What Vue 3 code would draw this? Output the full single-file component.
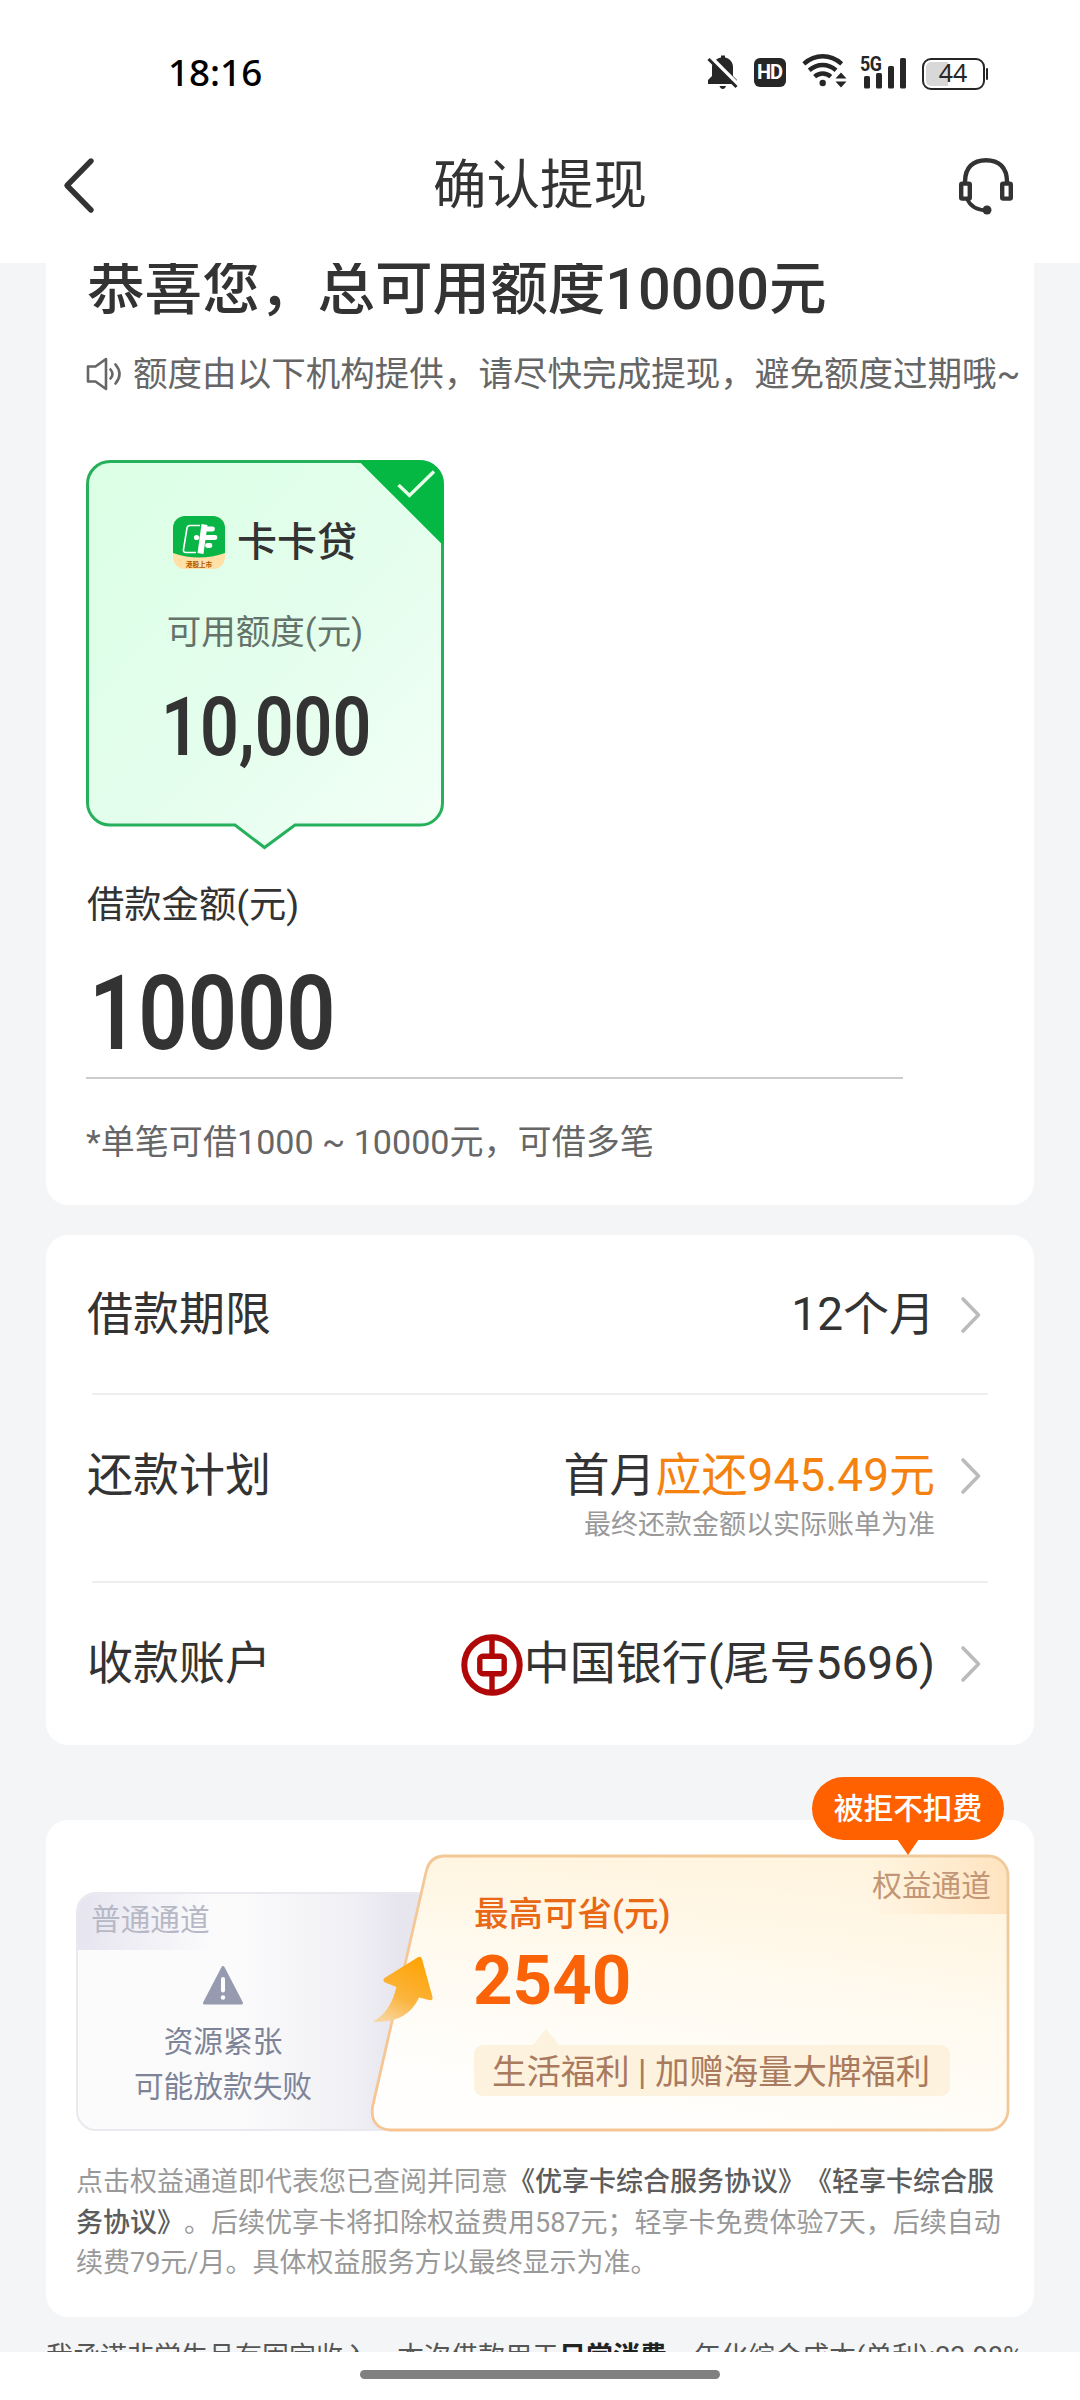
<script setup>
const amount = '10000'
const provider = { name: '卡卡贷', label: '可用额度(元)', quota: '10,000' }
</script>

<template>
  <div class="phone">
    <header class="top">
      <div class="status">
        <span class="time">18:16</span>
        <div class="status-icons">
          <svg class="bell" width="32" height="36" viewBox="0 0 32 36">
            <path d="M14 3.5V1.5h4v2c5 1.2 8 5 8 9.500v9l4 4v4H1v-4l4-4v-9C5 8.500 9 4.700 14 3.500z" fill="#262626" />
            <path d="M12.500 32h6.500c-.6 2-1.800 3-3.200 3s-2.700-1-3.300-3z" fill="#262626" />
            <path d="M3 2.500L33 32.500" stroke="#fff" stroke-width="4" />
            <path d="M1.500 5L29.500 33" stroke="#262626" stroke-width="3" />
          </svg>
          <span class="hd">HD</span>
          <svg class="wifi" width="45" height="36" viewBox="0 0 45 36" fill="none" stroke="#262626" stroke-width="4.400">
            <path d="M1.800 10.800C13.500 .8 28 .8 39.700 10.800" />
            <path d="M7.200 17.200C15.500 10.300 25.800 10.300 34 17.200" />
            <path d="M12.600 23.600C17.400 19.400 24 19.400 28.800 23.600" />
            <circle cx="20.700" cy="30" r="3.200" fill="#262626" stroke="none" />
            <path d="M39 19.500l5.500 6h-11zM39 34.500l5.500-6h-11z" fill="#262626" stroke="none" />
          </svg>
          <div class="signal">
            <span class="net">5G</span>
            <svg width="48" height="32" viewBox="0 0 48 32" fill="#262626">
              <rect x="4" y="19" width="6" height="12.500" rx="1.500" />
              <rect x="16" y="16" width="6" height="15.500" rx="1.500" />
              <rect x="28" y="9" width="6" height="22.500" rx="1.500" />
              <rect x="40" y="1" width="6" height="30.500" rx="1.500" />
            </svg>
          </div>
          <div class="battery"><i class="charge"></i><span>44</span></div>
          <i class="nub"></i>
        </div>
      </div>
      <nav class="nav">
        <svg width="36" height="60" viewBox="0 0 36 60" fill="none" stroke="#333" stroke-width="5.400" stroke-linecap="round" stroke-linejoin="round">
          <path d="M31 6L7 30.500L31 55" />
        </svg>
        <h1>确认提现</h1>
        <svg width="56" height="60" viewBox="0 0 56 60" fill="none" stroke="#333" stroke-width="4.400">
          <path d="M7 27C7 12.500 15 5.200 28 5.200S49 12.500 49 27" />
          <rect x="3.200" y="28.600" width="8.600" height="15" rx="1" />
          <rect x="44.200" y="28.600" width="8.600" height="15" rx="1" />
          <path d="M9 43.500C12 51.500 19 55 29 55.500" stroke-width="3.600" />
          <circle cx="29" cy="55" r="4.500" fill="#333" stroke="none" />
        </svg>
      </nav>
    </header>

    <main class="scroll">
      <section class="card amount-card">
        <h2>恭喜您，总可用额度10000元</h2>
        <div class="tip">
          <svg width="38" height="36" viewBox="0 0 38 36" fill="none" stroke="#666" stroke-width="2.600" stroke-linejoin="round">
            <path d="M2 10.500H9.500L20 3V33L9.500 25.500H2Z" />
            <path d="M24.500 13.500Q28.500 18 24.500 22.500M29.500 8.500Q37.500 18 29.500 27.500" stroke-linecap="round" />
          </svg>
          <span>额度由以下机构提供，请尽快完成提现，避免额度过期哦~</span>
        </div>

        <div class="provider">
          <svg class="provider-bg" width="358" height="390" viewBox="0 0 358 390">
            <defs>
              <linearGradient id="mint" x1="0" y1="0" x2="1" y2="1">
                <stop offset="0" stop-color="#dbffe5" />
                <stop offset=".5" stop-color="#e3feec" />
                <stop offset="1" stop-color="#f3fff7" />
              </linearGradient>
            </defs>
            <path d="M24 1.500H334A22.500 22.500 0 0 1 356.500 24V343A22 22 0 0 1 334 365H209L178.500 387.500L149 365H24A22.500 22.500 0 0 1 1.500 343V24A22.500 22.500 0 0 1 24 1.500Z" fill="url(#mint)" stroke="#27b05c" stroke-width="3" />
            <path d="M272 .2H334A23.800 23.800 0 0 1 357.800 24V86Z" fill="#05b843" />
            <path d="M312.500 25L323.500 35.500L348 11.500" fill="none" stroke="#e8ffe9" stroke-width="3.400" />
          </svg>
          <div class="provider-name">
            <svg width="52" height="53" viewBox="0 0 52 53">
              <defs><clipPath id="tile"><rect width="52" height="53" rx="12" /></clipPath></defs>
              <g clip-path="url(#tile)">
                <rect width="52" height="53" fill="#ffe0a6" />
                <path d="M0 0H52V37Q26 46 0 37Z" fill="#09b546" />
                <path d="M27 9.500H17Q14.500 9.500 14 12L10.500 33.500Q10 36.500 13 36.500H23" fill="none" stroke="#fff" stroke-width="1.600" />
                <path d="M31.500 8.500L27.500 37.500" stroke="#fff" stroke-width="6" />
                <path d="M32 13H39.500M29 21.500H42M34.500 29.500H37" stroke="#fff" stroke-width="4.800" stroke-linecap="round" />
                <circle cx="23.500" cy="21.500" r="2.600" fill="#fff" />
              </g>
              <text x="26" y="50.500" text-anchor="middle" font-size="6.600" font-weight="700" fill="#ab5600">港股上市</text>
            </svg>
            <span>{{ provider.name }}</span>
          </div>
          <div class="provider-label">{{ provider.label }}</div>
          <div class="provider-quota"><span>{{ provider.quota }}</span></div>
        </div>

        <div class="field-label">借款金额(元)</div>
        <div class="field"><span>{{ amount }}</span></div>
        <div class="note">*单笔可借1000 ~ 10000元，可借多笔</div>
      </section>

      <section class="card rows">
        <div class="row r1">
          <span>借款期限</span>
          <div class="value"><span>12个月</span></div>
          <svg class="chev" width="22" height="38" viewBox="0 0 22 38"><path d="M3 3L18.500 19L3 35" /></svg>
        </div>
        <div class="row r2">
          <span>还款计划</span>
          <div class="value">
            <span>首月<em>应还945.49元</em></span>
            <small>最终还款金额以实际账单为准</small>
          </div>
          <svg class="chev" width="22" height="38" viewBox="0 0 22 38"><path d="M3 3L18.500 19L3 35" /></svg>
        </div>
        <div class="row r3">
          <span>收款账户</span>
          <div class="value bank">
            <svg width="62" height="62" viewBox="0 0 62 62" fill="none" stroke="#b00808">
              <circle cx="31" cy="31" r="27.700" stroke-width="6" />
              <rect x="18.800" y="22.300" width="24.400" height="17.500" rx="3" stroke-width="5.400" />
              <path d="M31 3V22M31 40V59" stroke-width="5.400" />
            </svg>
            <span>中国银行(尾号5696)</span>
          </div>
          <svg class="chev" width="22" height="38" viewBox="0 0 22 38"><path d="M3 3L18.500 19L3 35" /></svg>
        </div>
      </section>

      <section class="card channel-card">
        <div class="bubble">被拒不扣费</div>
        <div class="channels">
          <div class="normal">
            <div class="normal-tag">普通通道</div>
            <div class="normal-body">
              <svg width="42" height="40" viewBox="0 0 42 40">
                <path d="M21 2.500L39.500 38H2.500Z" fill="#969bb0" stroke="#969bb0" stroke-width="3" stroke-linejoin="round" />
                <path d="M21 14V25.500" stroke="#fff" stroke-width="4" stroke-linecap="round" />
                <circle cx="21" cy="32.500" r="2.200" fill="#fff" />
              </svg>
              <p>资源紧张</p>
              <p>可能放款失败</p>
            </div>
          </div>
          <div class="vip">
            <svg class="vip-bg" width="640" height="278" viewBox="0 0 640 278">
              <defs>
                <linearGradient id="cream" x1=".62" y1="1" x2="1" y2="0">
                  <stop offset="0" stop-color="#fffefc" />
                  <stop offset=".5" stop-color="#fffaef" />
                  <stop offset="1" stop-color="#fff0d4" />
                </linearGradient>
                <linearGradient id="veil" x1="0" y1="0" x2="0" y2="1">
                  <stop offset="0" stop-color="#fff5e0" stop-opacity=".8" />
                  <stop offset=".6" stop-color="#fffaf0" stop-opacity="0" />
                </linearGradient>
                <linearGradient id="tag" x1="0" y1="0" x2="1" y2="0">
                  <stop offset="0" stop-color="#ffe6c4" stop-opacity="0" />
                  <stop offset="1" stop-color="#fee3bf" />
                </linearGradient>
                <linearGradient id="edge" x1="0" y1="1" x2="1" y2="0">
                  <stop offset="0" stop-color="#f8c493" />
                  <stop offset="1" stop-color="#efcb9c" />
                </linearGradient>
                <clipPath id="vip-shape"><path d="M73 2H618A20 20 0 0 1 638 22V256A20 20 0 0 1 618 276H20Q0 274 2.500 253L56.500 16Q60 3 73 2Z" /></clipPath>
              </defs>
              <path d="M73 2H618A20 20 0 0 1 638 22V256A20 20 0 0 1 618 276H20Q0 274 2.500 253L56.500 16Q60 3 73 2Z" fill="url(#cream)" />
              <path d="M73 2H618A20 20 0 0 1 638 22V256A20 20 0 0 1 618 276H20Q0 274 2.500 253L56.500 16Q60 3 73 2Z" fill="url(#veil)" />
              <rect x="500" y="2" width="140" height="58" fill="url(#tag)" clip-path="url(#vip-shape)" />
              <path d="M73 2H618A20 20 0 0 1 638 22V256A20 20 0 0 1 618 276H20Q0 274 2.500 253L56.500 16Q60 3 73 2Z" fill="none" stroke="url(#edge)" stroke-width="2.800" />
            </svg>
            <svg class="arrow" width="64" height="70" viewBox="0 0 64 70">
              <defs>
                <linearGradient id="amber" x1=".7" y1="0" x2=".25" y2="1">
                  <stop offset="0" stop-color="#ffa305" />
                  <stop offset=".6" stop-color="#fbb43c" />
                  <stop offset="1" stop-color="#f9d49b" />
                </linearGradient>
              </defs>
              <path d="M47.500 3.500Q50.500 1.500 52 5L62.500 43Q63 47 59 46L49 43.500Q37 70 3 67.500Q20 59 26.500 33L15 28.500Q12 26.500 14.500 24Z" fill="url(#amber)" />
            </svg>
            <div class="vip-tag">权益通道</div>
            <div class="vip-label">最高可省(元)</div>
            <div class="vip-sum">2540</div>
            <div class="chip">生活福利 | 加赠海量大牌福利</div>
          </div>
        </div>
        <p class="terms">
          <span>点击权益通道即代表您已查阅并同意<b>《优享卡综合服务协议》《轻享卡综合服</b></span>
          <span><b>务协议》</b>。后续优享卡将扣除权益费用587元；轻享卡免费体验7天，后续自动</span>
          <span>续费79元/月。具体权益服务方以最终显示为准。</span>
        </p>
      </section>

      <p class="promise">我承诺非学生且有固定收入，本次借款用于<b>日常消费</b>，年化综合成本(单利):23.98%</p>
    </main>

    <footer class="bottom"><i></i></footer>
  </div>
</template>

<style>
body {
  margin: 0;
  background: #fff;
}
</style>

<style scoped>
.phone {
  width: 1080px;
  height: 2400px;
  display: flex;
  flex-direction: column;
  overflow: hidden;
  background: #fff;
  color: #333;
  font-family: Roboto, "Noto Sans CJK SC", sans-serif;
  font-kerning: none;
  text-spacing-trim: space-all;
}
h1, h2, p { margin: 0; font-weight: 400; }
em, i { font-style: normal; }
svg { display: block; flex: none; }

.top { height: 263px; flex: none; }
.status {
  height: 108px;
  box-sizing: border-box;
  padding: 53px 92px 0 168px;
  display: flex;
  justify-content: space-between;
  align-items: flex-start;
}
.time {
  font: 500 36.8px/38px "Noto Sans", sans-serif;
  color: #000;
}
.status-icons { display: flex; align-items: flex-start; }
.bell { margin-top: 1px; }
.hd {
  margin: 5px 0 0 15px;
  width: 32px;
  height: 29px;
  border-radius: 6px;
  background: #262626;
  color: #fff;
  font: 700 20px/29px Roboto, sans-serif;
  letter-spacing: -1px;
  text-align: center;
}
.wifi { margin-left: 16px; }
.signal { position: relative; margin: 4px 0 0 13px; width: 48px; }
.net {
  position: absolute;
  left: 0;
  top: -3px;
  font: 700 21px/21px Roboto, sans-serif;
  letter-spacing: -.5px;
  color: #262626;
  transform: scaleX(.85);
  transform-origin: 0 0;
}
.battery {
  position: relative;
  margin: 5px 0 0 14px;
  box-sizing: border-box;
  width: 63px;
  height: 32px;
  border: 2.5px solid #262626;
  border-radius: 9px;
  background: #fff;
  display: flex;
  justify-content: center;
  font: 400 25px/25px "Noto Sans", sans-serif;
  color: #262626;
}
.battery span { position: relative; }
.charge {
  position: absolute;
  left: 2px;
  top: 2px;
  bottom: 2px;
  width: 22px;
  border-radius: 5px 0 0 5px;
  background: #d8d8d8;
}
.nub { width: 2.5px; height: 12px; margin: 15px 0 0 1px; background: #262626; border-radius: 1px; }

.nav {
  display: flex;
  align-items: center;
  justify-content: space-between;
  padding: 0 66px 0 60px;
  height: 153px;
}
.nav h1 { font-size: 53.5px; line-height: 60px; margin: 3px 0 0 26px; }

.scroll {
  flex: none;
  height: 2089px;
  background: #f4f5f7;
  overflow: hidden;
  display: flex;
  flex-direction: column;
}
.card { margin: 0 46px; flex: none; background: #fff; border-radius: 22px; box-sizing: border-box; }

.amount-card { height: 942px; padding: 0 40px; border-radius: 0 0 22px 22px; }
.amount-card h2 { font-size: 57.6px; font-weight: 500; line-height: 60px; padding-left: 1px; margin-top: -3px; white-space: nowrap; }
.tip {
  display: flex;
  align-items: center;
  gap: 9px;
  margin-top: 34px;
  height: 40px;
  font-size: 34.55px;
  line-height: 40px;
  color: #666;
  white-space: nowrap;
}
.provider {
  position: relative;
  margin-top: 66px;
  width: 358px;
  height: 390px;
  display: flex;
  flex-direction: column;
  align-items: center;
}
.provider-bg { position: absolute; left: 0; top: 0; }
.provider-name, .provider-label, .provider-quota { position: relative; }
.provider-name {
  display: flex;
  align-items: center;
  gap: 12px;
  margin-top: 56px;
  font-size: 40px;
  font-weight: 500;
  line-height: 52px;
}
.provider-label { margin-top: 41px; font-size: 34.5px; line-height: 44px; color: #64736a; }
.provider-quota { margin: 34px 0 0 2px; line-height: 80px; font-size: 81px; font-weight: 600; }
.provider-quota span { display: block; transform: scaleX(.84); }

.field-label { margin: 35px 0 0 1px; font-size: 37.3px; line-height: 40px; }
.field {
  margin-top: 25px;
  width: 817px;
  height: 127px;
  border-bottom: 2px solid #ccc;
  font-size: 104px;
  font-weight: 600;
  line-height: 127px;
}
.field span { display: inline-block; transform: scaleX(.83); transform-origin: 0 0; margin-left: 3px; }
.note { margin-top: 42px; font-size: 34.1px; line-height: 42px; color: #666; }

.rows { height: 510px; margin-top: 30px; padding: 0 46px; }
.row { display: flex; align-items: flex-start; font-size: 46px; line-height: 60px; box-sizing: border-box; }
.row > span { margin-left: -5px; }
.r1 { height: 160px; padding-top: 49px; border-bottom: 2px solid #eee; }
.r2 { height: 188px; padding-top: 50px; border-bottom: 2px solid #eee; }
.r3 { padding-top: 50px; }
.value { margin-left: auto; display: flex; flex-direction: column; align-items: flex-end; white-space: nowrap; }
.value em { color: #f5820f; }
.value small { font-size: 27px; line-height: 32px; color: #999; margin-top: 4px; }
.value.bank { flex-direction: row; align-items: flex-start; gap: 1px; }
.bank svg { margin-top: 1px; }
.chev { margin: 12px 6px 0 25px; fill: none; stroke: #bbb; stroke-width: 3.6; stroke-linecap: round; stroke-linejoin: round; }

.channel-card { position: relative; height: 497px; margin-top: 75px; padding: 34px 25px 0 30px; }
.bubble {
  position: absolute;
  z-index: 2;
  left: 766px;
  top: -43px;
  width: 192px;
  height: 63px;
  border-radius: 32px;
  background: #ff6100;
  color: #fff;
  font-size: 29.7px;
  line-height: 64px;
  font-weight: 500;
  text-align: center;
}
.bubble::after {
  content: "";
  position: absolute;
  left: 85px;
  top: 62px;
  border: 11px solid transparent;
  border-top: 16px solid #ff6100;
  border-bottom: 0;
}
.channels { display: flex; align-items: flex-end; height: 277px; }
.normal {
  flex: none;
  width: 360px;
  height: 239px;
  box-sizing: border-box;
  border: 2px solid #e9e9ef;
  border-radius: 20px 0 0 20px;
  background: linear-gradient(90deg, #fbfbfc 45%, #f1f1f5 75%, #e7e6ef 90%);
  overflow: hidden;
}
.normal-tag {
  height: 56px;
  padding-left: 13px;
  background: linear-gradient(90deg, #e6e5f0, rgba(240, 240, 246, 0) 135px);
  color: #b7b8c6;
  font-size: 29.7px;
  line-height: 52px;
}
.normal-body { width: 290px; display: flex; flex-direction: column; align-items: center; padding-top: 15px; }
.normal-body p { color: #7e8498; font-size: 29.7px; line-height: 45px; }
.normal-body svg { margin-bottom: 14px; }
.vip { position: relative; margin-left: -66px; width: 640px; height: 277px; flex: none; }
.vip-bg { position: absolute; left: 0; top: 0; }
.arrow { position: absolute; left: 0; top: 100px; }
.vip-tag { position: absolute; right: 19px; top: 12px; font-size: 29.7px; line-height: 40px; color: #c29676; }
.vip-label { position: relative; margin-left: 104px; padding-top: 39px; font-size: 34.5px; line-height: 42px; font-weight: 500; color: #e96815; }
.vip-sum { position: relative; margin: 15px 0 0 103px; font-size: 69px; line-height: 62px; font-weight: 700; color: #fa6308; }
.chip {
  position: relative;
  margin: 33px 0 0 104px;
  width: 476px;
  height: 51px;
  box-sizing: border-box;
  padding-left: 18px;
  border-radius: 9px;
  background: #fcf2dd;
  color: #a97a5e;
  font-size: 34.4px;
  line-height: 55px;
  white-space: nowrap;
}
.chip::before {
  content: "";
  position: absolute;
  left: 59px;
  top: -16px;
  border: 13px solid transparent;
  border-bottom: 16px solid #fcf2dd;
  border-top: 0;
}
.terms { margin: 31px 0 0; font-size: 27px; line-height: 40.5px; color: #999; white-space: nowrap; }
.terms span { display: block; }
.terms b { font-weight: 500; color: #5c5c5c; }

.promise { margin: 20px 46px 0; flex: none; font-size: 27px; line-height: 40px; color: #555; white-space: nowrap; }
.promise b { font-weight: 700; color: #222; }

.bottom { flex: 1; background: #fff; display: flex; justify-content: center; align-items: flex-start; }
.bottom i { margin-top: 18px; width: 360px; height: 9px; border-radius: 5px; background: #808080; }
</style>
